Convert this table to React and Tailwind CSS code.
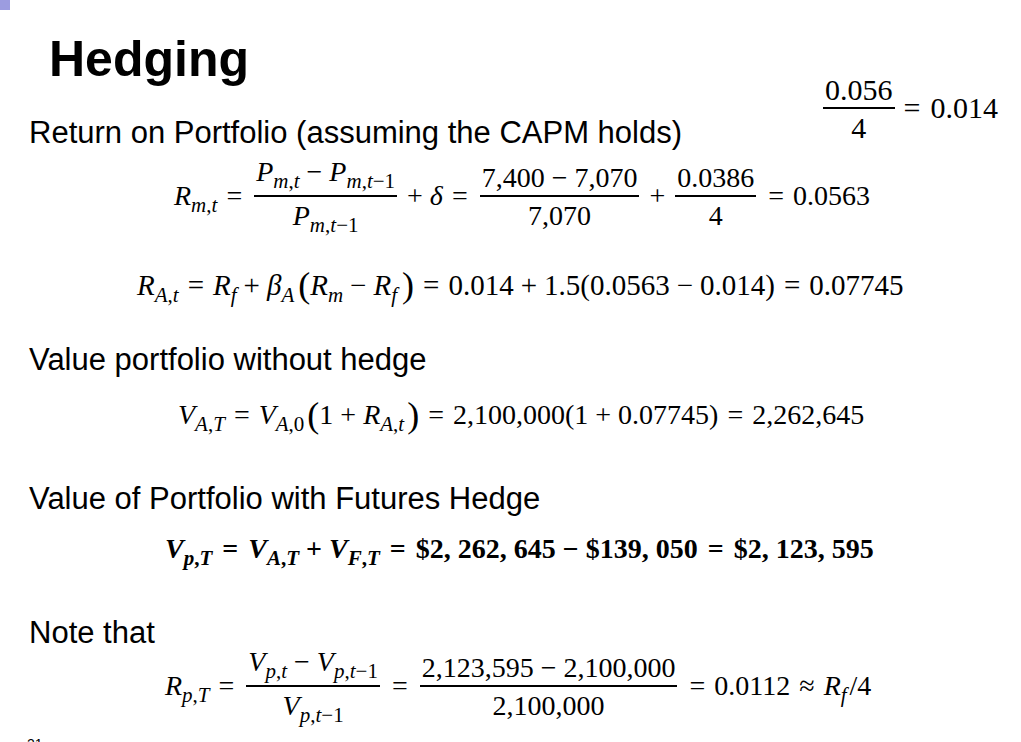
const Sub = ({ children, bold }) => (
    <span className={`relative top-[7px] text-[21px] leading-none ${bold ? "font-bold" : ""}`}>{children}</span>
)

const I = ({ children }) => <span className="italic">{children}</span>

const Op = ({ children }) => <span className="mx-[7px]">{children}</span>
const Rel = ({ children, wide }) => <span className={wide ? "mx-[10px]" : "mx-[9px]"}>{children}</span>

// tall = numerator carries subscripts, so it sits higher above the bar
const Frac = ({ num, den, tall }) => (
    <span className="inline-flex flex-col mx-[3px]">
        <span className={`${tall ? "h-[39px] pb-[9px]" : "h-[33px] pb-[3px]"} pt-[2px] px-[2px] text-center whitespace-nowrap`}>{num}</span>
        <span className="h-[1.5px] bg-black" />
        <span className={`${tall ? "h-[39px]" : "h-[33px]"} pt-[5px] px-[2px] text-center whitespace-nowrap`}>{den}</span>
    </span>
)

const Row = ({ pad, h, mt, children, bold, size = "text-[28px]" }) => (
    <div
        className={`flex items-center whitespace-nowrap font-['Liberation_Serif',serif] leading-[28px] text-black ${size} ${bold ? "font-bold" : ""}`}
        style={{ paddingLeft: pad, height: h, marginTop: mt }}
    >
        {children}
    </div>
)

const Heading = ({ mt, children }) => (
    <div className="pl-[29px] text-[31px] leading-none text-black" style={{ marginTop: mt }}>
        {children}
    </div>
)

const Paren = ({ children, className = "" }) => (
    <span className={`text-[36px] leading-[28px] ${className}`}>{children}</span>
)

export default function App() {
    return (
        <div className="w-[1021px] h-[742px] overflow-hidden bg-white font-['Liberation_Sans',Arial,sans-serif]">
            <div className="h-[10px] w-[10px] bg-[#9c9ce0]" />

            {/* title + top right note */}
            <div className="h-[150px] flex justify-between">
                <div className="pl-[29px]">
                    <h1 className="ml-[20px] mt-[24px] text-[50px] leading-none font-bold text-black">Hedging</h1>
                    <p className="mt-[33px] text-[31px] leading-none text-black">Return on Portfolio (assuming the CAPM holds)</p>
                </div>
                <div className="pt-[64px] pr-[23px] flex items-start">
                    <div className="flex items-center font-['Liberation_Serif',serif] text-[30px] leading-[28px]">
                        <Frac num="0.056" den="4" />
                        <span className="ml-[6px] mr-[10px]">=</span>
                        <span>0.014</span>
                    </div>
                </div>
            </div>

            {/* R_m,t */}
            <Row pad={174} h={72}>
                <span><I>R</I><Sub><I>m</I>,<I>t</I></Sub></span>
                <Rel>=</Rel>
                <Frac
                    tall
                    num={<><I>P</I><Sub><I>m</I>,<I>t</I></Sub><Op>−</Op><I>P</I><Sub><I>m</I>,<I>t</I>−1</Sub></>}
                    den={<><I>P</I><Sub><I>m</I>,<I>t</I>−1</Sub></>}
                />
                <Op>+</Op>
                <span className="italic">δ</span>
                <Rel>=</Rel>
                <Frac num={<>7,400<Op>−</Op>7,070</>} den="7,070" />
                <Op>+</Op>
                <Frac num="0.0386" den="4" />
                <Rel>=</Rel>
                <span>0.0563</span>
            </Row>

            {/* CAPM */}
            <Row pad={137} h={40} mt={33} size="text-[29px]">
                <span><I>R</I><Sub><I>A</I>,<I>t</I></Sub></span>
                <Rel>=</Rel>
                <span><I>R</I><Sub><I>f</I></Sub></span>
                <Op>+</Op>
                <span><I>β</I><Sub><I>A</I></Sub></span>
                <Paren className="ml-[4px]">(</Paren>
                <span><I>R</I><Sub><I>m</I></Sub></span>
                <Op>−</Op>
                <span><I>R</I><Sub><I>f</I></Sub></span>
                <Paren className="ml-[5px]">)</Paren>
                <Rel>=</Rel>
                <span>0.014</span>
                <Op>+</Op>
                <span>1.5(0.0563</span>
                <Op>−</Op>
                <span>0.014)</span>
                <Rel>=</Rel>
                <span>0.07745</span>
            </Row>

            <Heading mt={39}>Value portfolio without hedge</Heading>

            <Row pad={178} h={40} mt={20}>
                <span><I>V</I><Sub><I>A</I>,<I>T</I></Sub></span>
                <Rel>=</Rel>
                <span><I>V</I><Sub><I>A</I>,0</Sub></span>
                <Paren className="ml-[3px]">(</Paren>
                <span>1</span>
                <Op>+</Op>
                <span><I>R</I><Sub><I>A</I>,<I>t</I></Sub></span>
                <Paren className="ml-[3px]">)</Paren>
                <Rel>=</Rel>
                <span>2,100,000(1</span>
                <Op>+</Op>
                <span>0.07745)</span>
                <Rel>=</Rel>
                <span>2,262,645</span>
            </Row>

            <Heading mt={48}>Value of Portfolio with Futures Hedge</Heading>

            <Row pad={165} h={40} mt={15} bold>
                <span><I>V</I><Sub bold><I>p</I>,<I>T</I></Sub></span>
                <Rel wide>=</Rel>
                <span><I>V</I><Sub bold><I>A</I>,<I>T</I></Sub></span>
                <Op>+</Op>
                <span><I>V</I><Sub bold><I>F</I>,<I>T</I></Sub></span>
                <Rel wide>=</Rel>
                <span>$2, 262, 645</span>
                <Op>−</Op>
                <span>$139, 050</span>
                <Rel wide>=</Rel>
                <span>$2, 123, 595</span>
            </Row>

            <Heading mt={48}>Note that</Heading>

            <Row pad={165} h={72} mt={2}>
                <span><I>R</I><Sub><I>p</I>,<I>T</I></Sub></span>
                <Rel>=</Rel>
                <Frac
                    tall
                    num={<><I>V</I><Sub><I>p</I>,<I>t</I></Sub><Op>−</Op><I>V</I><Sub><I>p</I>,<I>t</I>−1</Sub></>}
                    den={<><I>V</I><Sub><I>p</I>,<I>t</I>−1</Sub></>}
                />
                <Rel>=</Rel>
                <Frac num={<>2,123,595<Op>−</Op>2,100,000</>} den="2,100,000" />
                <Rel>=</Rel>
                <span>0.0112</span>
                <Rel>≈</Rel>
                <span><I>R</I><Sub><I>f</I></Sub><span className="ml-[3px]">/4</span></span>
            </Row>

            <div className="pl-[27px] mt-[15px] text-[14px] leading-none text-black">21</div>
        </div>
    )
}
